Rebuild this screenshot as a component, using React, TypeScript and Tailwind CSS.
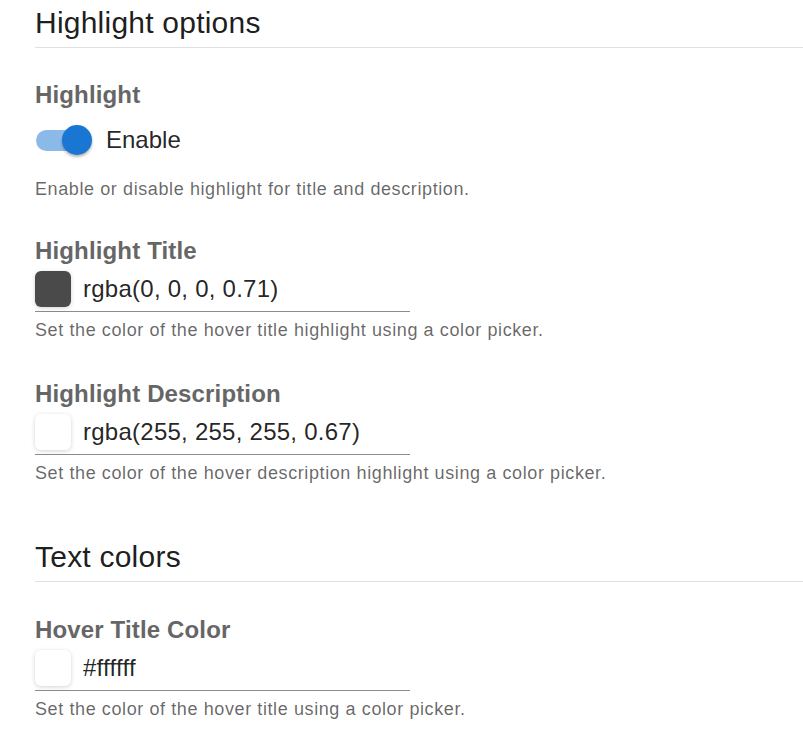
import React from 'react';

const font = { fontFamily: '"Liberation Sans", Arial, sans-serif' };

function SectionHeading({ title }: { title: string }) {
  return (
    <div className="border-b border-[#e0e0e0] pb-[6px]">
      <h2 className="text-[30px] leading-[36px] font-normal tracking-[0.225px] text-[rgba(0,0,0,0.9)]">
        {title}
      </h2>
    </div>
  );
}

function Label({ children }: { children: React.ReactNode }) {
  return (
    <div className="text-[24px] leading-[28px] font-bold tracking-[0.15px] text-[#666666]">
      {children}
    </div>
  );
}

function Helper({ children }: { children: React.ReactNode }) {
  return (
    <p className="mt-[6px] text-[18px] leading-[24px] tracking-[0.6px] text-[rgba(0,0,0,0.6)]">
      {children}
    </p>
  );
}

function ColorField({
  label,
  value,
  swatch,
  helper,
}: {
  label: string;
  value: string;
  swatch: string;
  helper: string;
}) {
  return (
    <div>
      <Label>{label}</Label>
      <div className="mt-[6px] flex w-[375px] items-center gap-[12px] border-b border-[#8c8c8c] pb-[4px]">
        <span
          className="h-[36px] w-[36px] shrink-0 rounded-[6px] shadow-[0_1px_4px_rgba(0,0,0,0.18)]"
          style={{ backgroundColor: swatch }}
        />
        <span className="text-[24px] leading-[36px] tracking-[0.25px] text-[rgba(0,0,0,0.87)]">
          {value}
        </span>
      </div>
      <Helper>{helper}</Helper>
    </div>
  );
}

export default function App() {
  return (
    <div className="min-h-screen bg-white pl-[35px]" style={font}>
      <div className="pt-[5px]">
        <SectionHeading title="Highlight options" />
      </div>

      <div className="mt-[33px]">
        <Label>Highlight</Label>
        <div className="mt-[11px] flex h-[40px] items-center">
          {/* switch, checked */}
          <div className="relative h-[40px] w-[71px] shrink-0">
            <span className="absolute top-[9.5px] left-[1px] h-[21px] w-[51px] rounded-full bg-[#8cbae8]" />
            <span className="absolute top-[5px] left-[27px] h-[30px] w-[30px] rounded-full bg-[#1976d2] shadow-[0_2px_3px_rgba(0,0,0,0.3)]" />
          </div>
          <span className="text-[24px] leading-[36px] text-[rgba(0,0,0,0.87)]">Enable</span>
        </div>
        <p className="mt-[17px] text-[18px] leading-[24px] tracking-[0.6px] text-[rgba(0,0,0,0.6)]">
          Enable or disable highlight for title and description.
        </p>
      </div>

      <div className="mt-[36px]">
        <ColorField
          label="Highlight Title"
          value="rgba(0, 0, 0, 0.71)"
          swatch="rgba(0, 0, 0, 0.71)"
          helper="Set the color of the hover title highlight using a color picker."
        />
      </div>

      <div className="mt-[38px]">
        <ColorField
          label="Highlight Description"
          value="rgba(255, 255, 255, 0.67)"
          swatch="rgba(255, 255, 255, 0.67)"
          helper="Set the color of the hover description highlight using a color picker."
        />
      </div>

      <div className="mt-[54px]">
        <SectionHeading title="Text colors" />
      </div>

      <div className="mt-[34px]">
        <ColorField
          label="Hover Title Color"
          value="#ffffff"
          swatch="#ffffff"
          helper="Set the color of the hover title using a color picker."
        />
      </div>
    </div>
  );
}
